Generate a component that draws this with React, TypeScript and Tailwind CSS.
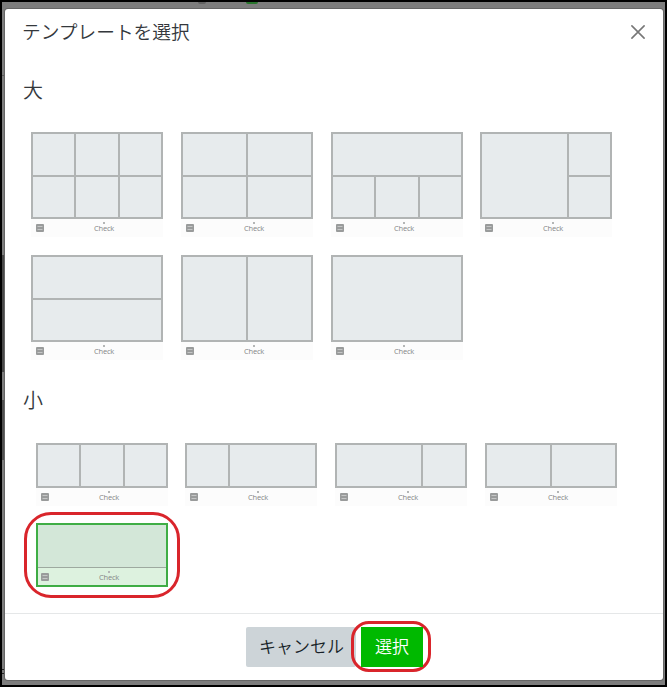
const jp = "font-['Noto_Sans_CJK_JP','Noto_Sans',sans-serif] font-[350]";

function Caption() {
  return (
    <div className="relative flex h-[18px] w-[132px] items-center bg-black/[0.012]">
      <svg className="mb-px ml-[5px] h-2 w-2 shrink-0" viewBox="0 0 8 8">
        <rect width="8" height="8" rx="1" fill="#999b9b" />
        <path d="M1.5 2.5h5M1.5 5.5h5" stroke="#c9cbcb" strokeWidth=".9" />
      </svg>
      <span className="ml-[50px] font-['Open_Sans',sans-serif] text-[7.5px] font-normal leading-[9px] tracking-[-0.2px] text-[#858787]">
        Check
      </span>
      <span className="absolute left-[72px] top-[3px] h-[2px] w-[2px] bg-[#b4b6b6]" />
    </div>
  );
}

function Template({ cols, cells, small = false }: { cols: string; cells: string[]; small?: boolean }) {
  return (
    <div className="w-[132px]">
      <div
        className={`grid gap-x-[2px] gap-y-[2px] border-2 border-[#b1b4b4] bg-[#b1b4b4] ${cols} ${
          small ? "h-[45px]" : "h-[87px]"
        }`}
      >
        {cells.map((cell, i) => (
          <div key={i} className={`bg-[#e7ebed] ${cell}`} />
        ))}
      </div>
      <Caption />
    </div>
  );
}

const rows = "grid-rows-[41px_1fr]";

export default function App() {
  return (
    <div className={`flex h-[687px] w-[667px] flex-col border-2 border-black bg-[#7d7d7d] ${jp}`}>
      <div className="h-[7px] shrink-0 pl-[196px]">
        <div className="flex h-[2px] gap-[40px]">
          <span className="w-[8px] rounded-b bg-[#626262]" />
          <span className="w-[12px] rounded-b-full bg-[#28752c]" />
        </div>
      </div>
      <div className="flex h-[671px] shrink-0">
        <div className="flex w-[3px] shrink-0 flex-col bg-[#7d7d7d]">
          <span className="mt-[66px] h-px bg-[#5a5a5a]" />
          <span className="mt-[179px] h-[117px] bg-[#484848]" />
          <span className="mt-[28px] h-[60px] bg-[#4f4f4f]" />
          <span className="mt-[209px] h-px bg-[#222]" />
          <span className="mt-[3px] h-px bg-[#222]" />
        </div>
        <div className="flex w-[658px] shrink-0 flex-col rounded-[3px] bg-white shadow-[0_0_0_1px_#666]">
          <header className="flex h-[48px] shrink-0 items-center justify-between pl-[17px] pr-[18px]">
            <h1 className="-mt-[4px] text-[18.7px] leading-6 text-[#34383c]">テンプレートを選択</h1>
            <button aria-label="閉じる" className="-mt-[2px]">
              <svg className="h-[14px] w-[14px]" viewBox="0 0 14 14" stroke="#777" strokeWidth="1.6" strokeLinecap="round">
                <path d="M.9.9l12.2 12.2M13.1.9L.9 13.1" />
              </svg>
            </button>
          </header>
          <main className="flex h-[557px] shrink-0 flex-col border-b border-[#e5e7e8]">
            <h2 className="ml-[18px] mt-[21px] h-6 text-[20px] leading-6 text-[#34383c]">大</h2>
            <div className="ml-[26px] mt-[30px] grid grid-cols-[150px_150px_149px_132px] gap-y-[18px]">
              <Template cols={`grid-cols-[41px_42px_1fr] ${rows}`} cells={["", "", "", "", "", ""]} />
              <Template cols={`grid-cols-2 ${rows}`} cells={["", "", "", ""]} />
              <Template cols={`grid-cols-[41px_42px_1fr] ${rows}`} cells={["col-span-3", "", "", ""]} />
              <Template cols={`grid-cols-[1fr_41px] ${rows}`} cells={["row-span-2", "", ""]} />
              <Template cols={rows} cells={["", ""]} />
              <Template cols="grid-cols-2" cells={["", ""]} />
              <Template cols="" cells={[""]} />
            </div>
            <h2 className="ml-[18px] mt-[28px] h-6 text-[20px] leading-6 text-[#34383c]">小</h2>
            <div className="ml-[31px] mt-[31px] grid grid-cols-[149px_150px_150px_132px]">
              <Template small cols="grid-cols-[41px_42px_1fr]" cells={["", "", ""]} />
              <Template small cols="grid-cols-[41px_1fr]" cells={["", ""]} />
              <Template small cols="grid-cols-[1fr_42px]" cells={["", ""]} />
              <Template small cols="grid-cols-2" cells={["", ""]} />
            </div>
            <div className="ml-[19px] mt-[6px] h-[86px] w-[156px] rounded-[27px] border-[3px] border-[#d9252b] pl-[9px] pt-[8px]">
              <div className="h-[64px] w-[132px] border-2 border-[#3fae45] bg-[#e0f5e2]">
                <div className="h-[43px] border-b border-[#9da99f] bg-[#d3e7d8]" />
                <div className="-ml-[2px]">
                  <Caption />
                </div>
              </div>
            </div>
          </main>
          <footer className="ml-[241px] mt-[7px] flex h-[51px] items-center">
            <button className="h-10 w-[110px] shrink-0 rounded-[2px] bg-[#cdd4d8] pb-[2px] pl-[1px] text-[17px] text-[#171f27]">
              キャンセル
            </button>
            <div className="z-10 -ml-[5px] flex h-[51px] w-[80px] shrink-0 items-center rounded-[18px] border-[3px] border-[#d9252b] pl-[7px]">
              <button className="h-10 w-[62px] bg-[#00b900] pb-[2px] text-[17px] text-white">選択</button>
            </div>
          </footer>
        </div>
      </div>
    </div>
  );
}
